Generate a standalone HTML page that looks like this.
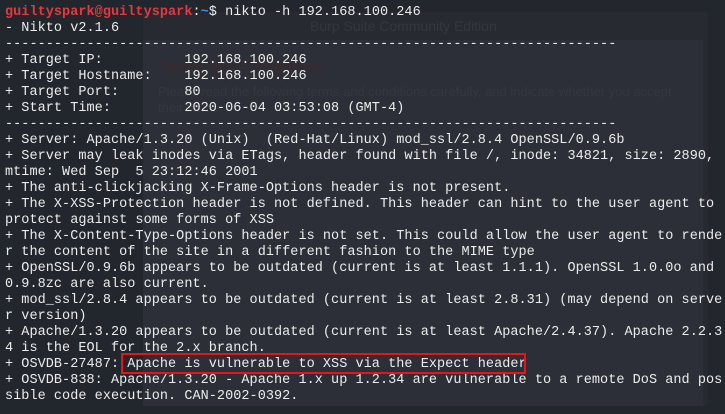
<!DOCTYPE html>
<html><head><meta charset="utf-8"><style>
html,body{margin:0;padding:0;}
body{width:725px;height:414px;background:#22262d;position:relative;overflow:hidden;}
.win{position:absolute;left:143px;top:12px;width:565px;height:394px;background:#272a31;border-radius:4px;}
.winc{position:absolute;left:143px;top:40px;width:560px;height:366px;background:#2c2f37;}
.ghost{position:absolute;color:#34373f;font-family:"Liberation Sans",sans-serif;font-size:13px;white-space:nowrap;}
pre{position:absolute;left:5px;top:5px;margin:0;font-family:"Liberation Mono",monospace;font-size:13.5px;line-height:16px;color:#ececec;letter-spacing:0.05px;}
.r{color:#e8383d;font-weight:bold}.b{color:#3d8fe8;font-weight:bold}
.box{position:absolute;left:121px;top:353px;width:401px;height:17px;border:2px solid #e8141a;}
</style></head><body>
<div class="win"></div><div class="winc"></div>
<div class="ghost" style="left:310px;top:18px;font-size:14px">Burp Suite Community Edition</div>
<div class="ghost" style="left:158px;top:58px;font-size:17px;color:#3a2a2d">Terms and Conditions</div>
<div class="ghost" style="left:158px;top:84px">Please read the following terms and conditions carefully, and indicate whether you accept</div>
<div class="ghost" style="left:158px;top:100px">their terms.</div>
<pre><span class="r">guiltyspark@guiltyspark</span>:<span class="b">~</span>$ nikto -h 192.168.100.246
- Nikto v2.1.6
---------------------------------------------------------------------------
+ Target IP:          192.168.100.246
+ Target Hostname:    192.168.100.246
+ Target Port:        80
+ Start Time:         2020-06-04 03:53:08 (GMT-4)
---------------------------------------------------------------------------
+ Server: Apache/1.3.20 (Unix)  (Red-Hat/Linux) mod_ssl/2.8.4 OpenSSL/0.9.6b
+ Server may leak inodes via ETags, header found with file /, inode: 34821, size: 2890,
mtime: Wed Sep  5 23:12:46 2001
+ The anti-clickjacking X-Frame-Options header is not present.
+ The X-XSS-Protection header is not defined. This header can hint to the user agent to
protect against some forms of XSS
+ The X-Content-Type-Options header is not set. This could allow the user agent to rende
r the content of the site in a different fashion to the MIME type
+ OpenSSL/0.9.6b appears to be outdated (current is at least 1.1.1). OpenSSL 1.0.0o and
0.9.8zc are also current.
+ mod_ssl/2.8.4 appears to be outdated (current is at least 2.8.31) (may depend on serve
r version)
+ Apache/1.3.20 appears to be outdated (current is at least Apache/2.4.37). Apache 2.2.3
4 is the EOL for the 2.x branch.
+ OSVDB-27487: Apache is vulnerable to XSS via the Expect header
+ OSVDB-838: Apache/1.3.20 - Apache 1.x up 1.2.34 are vulnerable to a remote DoS and pos
sible code execution. CAN-2002-0392.</pre>
<div class="box"></div>
</body></html>
